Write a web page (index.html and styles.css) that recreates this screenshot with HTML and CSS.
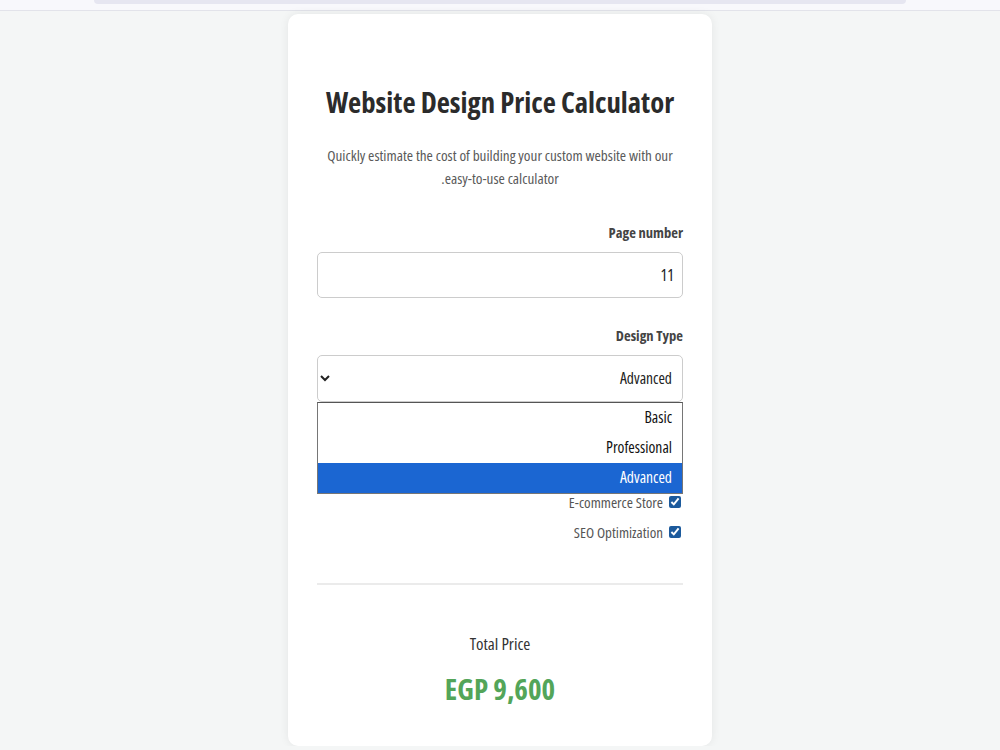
FILE: index.html
```html
<!DOCTYPE html>
<html lang="ar" dir="rtl">
    <head>
        <meta charset="UTF-8">
        <meta name="viewport" content="width=device-width,initial-scale=1.0">
        <title>Website Design Price Calculator</title>
        <link rel="stylesheet" href="styles.css">
    </head>
    <body>
        <header class="topbar">
            <div class="topbar-inner"></div>
        </header>
        <main class="page">
            <div class="card">
                <h1 class="title">Website Design Price Calculator</h1>
                <p class="subtitle">Quickly estimate the cost of building your custom website with our easy-to-use calculator.</p>

                <div class="field">
                    <label class="label" for="pages">Page number</label>
                    <input class="input" id="pages" type="text" value="11">
                </div>

                <div class="field">
                    <label class="label" for="design">Design Type</label>
                    <select class="select" id="design">
                        <option>Basic</option>
                        <option>Professional</option>
                        <option selected>Advanced</option>
                    </select>
                    <ul class="dropdown">
                        <li class="option">Basic</li>
                        <li class="option">Professional</li>
                        <li class="option active">Advanced</li>
                    </ul>
                </div>

                <div class="features">
                    <label class="check"><input type="checkbox" checked> E-commerce Store</label>
                    <label class="check"><input type="checkbox" checked> SEO Optimization</label>
                </div>

                <hr class="divider">

                <div class="total">
                    <p class="total-label">Total Price</p>
                    <p class="total-value">EGP 9,600</p>
                </div>
            </div>
        </main>
    </body>
</html>
```

FILE: styles.css
```css
*{
    margin: 0;
    padding: 0;
    box-sizing: border-box;
}
body{
    background-color: #f4f6f6;
    font-family: "Open Sans", "DejaVu Sans Condensed", sans-serif;
    font-stretch: 75%;
    color: #333;
}
.topbar{
    height: 11px;
    background-color: #f8f8fc;
    border-bottom: 1px solid #e2e3ea;
    display: flex;
    justify-content: center;
}
.topbar-inner{
    width: 812px;
    height: 4px;
    background-color: #e6e6f1;
    border-radius: 0 0 6px 6px;
}
.page{
    display: flex;
    justify-content: center;
    padding-top: 3px;
}
.card{
    width: 424px;
    background-color: #fff;
    border-radius: 10px;
    box-shadow: 0 0 10px rgba(0, 0, 0, 0.07);
    padding: 71px 29px 39px;
    text-align: center;
}
.title{
    font-size: 28.7px;
    line-height: 34px;
    font-weight: bold;
    color: #2b2b2b;
}
.subtitle{
    margin-top: 25px;
    font-size: 15.2px;
    line-height: 23px;
    color: #5a5a5a;
}
.field{
    margin-top: 32px;
    display: flex;
    flex-direction: column;
    text-align: right;
}
.field + .field{
    margin-top: 27px;
}
.label{
    font-size: 14.6px;
    line-height: 20px;
    font-weight: bold;
    color: #444;
    margin-bottom: 10px;
}
.input,
.select{
    width: 100%;
    font-family: inherit;
    font-stretch: inherit;
    font-size: 15.6px;
    color: #222;
    background-color: #fff;
    border: 1px solid #ccc;
    border-radius: 5px;
    padding: 0 8px;
    text-align: right;
}
.input{
    height: 46px;
    font-size: 16px;
}
.select{
    height: 47px;
    padding: 0 6px 2px;
}
.dropdown{
    list-style: none;
    background-color: #fff;
    border: 1px solid #767676;
    border-top-color: #555;
}
.option{
    height: 30px;
    line-height: 28px;
    padding: 0 10px 2px;
    font-size: 15.6px;
    color: #111;
}
.option.active{
    background-color: #1b66d2;
    color: #fff;
}
.features{
    display: flex;
    flex-direction: column;
    gap: 14px;
}
.check{
    height: 16px;
    display: flex;
    align-items: center;
    gap: 6px;
    font-size: 15px;
    color: #555;
}
.check input{
    width: 12px;
    height: 12px;
    margin: 0 2px 0 0;
    accent-color: #1c5a9c;
}
.divider{
    margin-top: 43px;
    border: none;
    height: 2px;
    background-color: #ebebeb;
}
.total{
    margin-top: 47px;
}
.total-label{
    font-size: 17px;
    line-height: 24px;
    color: #333;
}
.total-value{
    margin-top: 15px;
    font-size: 29px;
    line-height: 36px;
    font-weight: bold;
    color: #53a559;
}
```
